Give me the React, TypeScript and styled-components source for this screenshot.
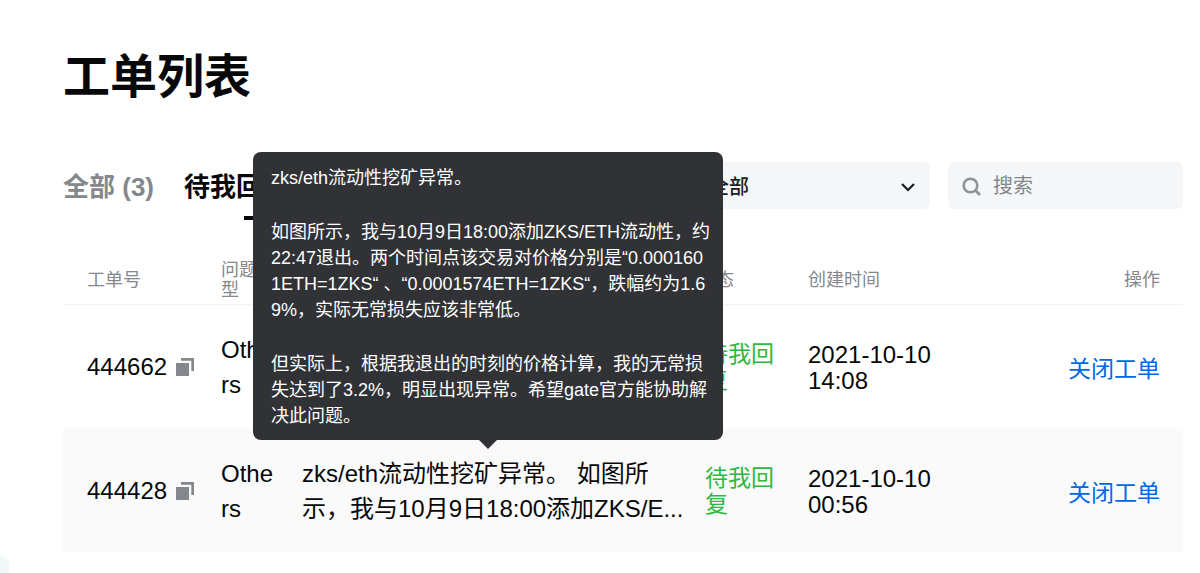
import React from "react";
import styled, { createGlobalStyle } from "styled-components";

const GlobalStyle = createGlobalStyle`
  * { box-sizing: border-box; }
  body {
    margin: 0;
    background: #fff;
    color: #06080a;
    font-family: "Liberation Sans", "Noto Sans CJK SC", sans-serif;
  }
  button, input, select { font-family: inherit; }
`;

const Page = styled.main`
  padding: 47px 17px 21px 63px;
`;

const Title = styled.h1`
  margin: 0 0 55px;
  font-size: 47px;
  line-height: 60px;
  font-weight: 700;
`;

const Toolbar = styled.div`
  display: flex;
  justify-content: space-between;
  align-items: center;
  margin-bottom: 45px;
`;

const Tabs = styled.div`
  display: flex;
  gap: 30px;
`;

const Tab = styled.button<{ $active?: boolean }>`
  position: relative;
  border: 0;
  padding: 4px 0 0;
  background: none;
  font-size: 26px;
  line-height: 43px;
  font-weight: 700;
  white-space: nowrap;
  color: ${(p) => (p.$active ? "#06080a" : "#84888c")};

  &::after {
    content: "";
    display: ${(p) => (p.$active ? "block" : "none")};
    position: absolute;
    left: 50%;
    bottom: -11px;
    width: 24px;
    height: 4px;
    margin-left: -12px;
    background: #06080a;
  }
`;

const Filters = styled.div`
  display: flex;
  gap: 18px;
`;

const Field = styled.label`
  display: flex;
  align-items: center;
  gap: 12px;
  width: 235px;
  height: 47px;
  padding: 2px 14px 0;
  border-radius: 6px;
  background: #f4f6f7;
`;

const Select = styled.select`
  flex: 1;
  min-width: 0;
  border: 0;
  padding: 0;
  background: none;
  appearance: none;
  font-size: 20px;
  font-weight: 500;
  color: #1b1e21;
`;

const SearchInput = styled.input`
  flex: 1;
  min-width: 0;
  border: 0;
  padding: 0;
  background: none;
  font-size: 20px;

  &::placeholder {
    color: #84888c;
    opacity: 1;
  }
`;

const Table = styled.table`
  width: 100%;
  table-layout: fixed;
  border-collapse: collapse;
`;

const Col = styled.col<{ $width?: number }>`
  width: ${(p) => (p.$width ? `${p.$width}px` : "auto")};
`;

const HeadCell = styled.th<{ $kind?: "id" | "status" | "action" }>`
  height: 50px;
  padding: 2px ${(p) => (p.$kind === "action" ? 23 : 12)}px 0
    ${(p) => (p.$kind === "id" ? 24 : p.$kind === "status" ? 5 : 12)}px;
  border-bottom: 1px solid #f1f2f3;
  font-size: 18px;
  line-height: 20px;
  font-weight: 400;
  text-align: ${(p) => (p.$kind === "action" ? "right" : "left")};
  color: #84888c;
`;

const Row = styled.tr`
  height: 124px;

  &:nth-child(even) { background: #fafafa; }
`;

const Cell = styled.td<{ $kind?: "id" | "type" | "content" | "status" | "date" | "action" }>`
  padding: ${(p) => (p.$kind === "action" ? 5 : p.$kind === "date" ? 4 : 2)}px
    ${(p) => (p.$kind === "action" ? 23 : p.$kind === "content" ? 6 : 12)}px 0
    ${(p) => (p.$kind === "id" ? 24 : 12)}px;
  font-size: ${(p) => (p.$kind === "status" || p.$kind === "action" ? 23 : 24)}px;
  line-height: ${(p) => (p.$kind === "type" || p.$kind === "content" ? 35 : 26)}px;
  text-align: ${(p) => (p.$kind === "action" ? "right" : "left")};
  word-break: ${(p) => (p.$kind === "type" ? "break-all" : "normal")};
  color: ${(p) => (p.$kind === "status" ? "#2eb840" : "inherit")};
`;

const TicketId = styled.div`
  display: flex;
  align-items: center;
  gap: 9px;
`;

const CopyButton = styled.button`
  display: flex;
  border: 0;
  padding: 0;
  background: none;
  color: #84888c;
`;

const CloseLink = styled.a`
  color: #0068e5;
  text-decoration: none;
`;

const Summary = styled.div`
  position: relative;
`;

const Tooltip = styled.div`
  position: absolute;
  z-index: 2;
  left: -49px;
  bottom: calc(100% + 16px);
  width: 470px;
  padding: 13px 12px 11px 18px;
  border-radius: 8px;
  background: #303236;
  color: #fff;
  font-size: 18px;
  line-height: 26px;
  word-break: break-all;

  &::after {
    content: "";
    position: absolute;
    top: 100%;
    left: 50%;
    margin-left: -9px;
    border: 9px solid transparent;
    border-top-color: #303236;
    border-bottom-width: 0;
  }
`;

const Paragraph = styled.p`
  margin: 0;

  & + & { margin-top: 28px; }
`;

const SideHandle = styled.div`
  position: fixed;
  left: 0;
  bottom: 0;
  width: 9px;
  height: 17px;
  border-top-right-radius: 8px;
  background: #f3f8f9;
`;

const CopyIcon = () => (
  <svg width="18" height="18" viewBox="0 0 18 18" fill="currentColor" aria-hidden="true">
    <path d="M0 5h13v13H0zM5 0h13v13h-2.700V2.700H5z" />
  </svg>
);

const ChevronIcon = () => (
  <svg width="16" height="16" viewBox="0 0 16 16" fill="none" stroke="#1b1e21" strokeWidth="2.200" aria-hidden="true">
    <path d="M2 5l6 6 6-6" />
  </svg>
);

const SearchIcon = () => (
  <svg width="19" height="19" viewBox="0 0 19 19" fill="none" stroke="#8e9296" strokeWidth="2.600" aria-hidden="true">
    <circle cx="8.500" cy="8.500" r="6.800" />
    <path d="M13 13l5 5" />
  </svg>
);

const tickets = [
  { id: "444662", type: "Others", date: "2021-10-10", time: "14:08", open: false },
  { id: "444428", type: "Others", date: "2021-10-10", time: "00:56", open: true },
];

const App = () => (
  <>
    <GlobalStyle />
    <Page>
      <Title>工单列表</Title>
      <Toolbar>
        <Tabs>
          <Tab>全部 (3)</Tab>
          <Tab $active>待我回复 (2)</Tab>
        </Tabs>
        <Filters>
          <Field>
            <Select aria-label="问题类型" defaultValue="all">
              <option value="all">全部</option>
            </Select>
            <ChevronIcon />
          </Field>
          <Field>
            <SearchIcon />
            <SearchInput aria-label="搜索" placeholder="搜索" />
          </Field>
        </Filters>
      </Toolbar>
      <Table>
        <colgroup>
          <Col $width={146} />
          <Col $width={81} />
          <Col />
          <Col $width={103} />
          <Col $width={160} />
          <Col $width={227} />
        </colgroup>
        <thead>
          <tr>
            <HeadCell $kind="id">工单号</HeadCell>
            <HeadCell>问题类型</HeadCell>
            <HeadCell />
            <HeadCell $kind="status">状态</HeadCell>
            <HeadCell>创建时间</HeadCell>
            <HeadCell $kind="action">操作</HeadCell>
          </tr>
        </thead>
        <tbody>
          {tickets.map((t) => (
            <Row key={t.id}>
              <Cell $kind="id">
                <TicketId>
                  {t.id}
                  <CopyButton aria-label="复制">
                    <CopyIcon />
                  </CopyButton>
                </TicketId>
              </Cell>
              <Cell $kind="type">{t.type}</Cell>
              <Cell $kind="content">
                {t.open && (
                  <Summary>
                    zks/eth流动性挖矿异常。 如图所示，我与10月9日18:00添加ZKS/E...
                    <Tooltip role="tooltip">
                      <Paragraph>zks/eth流动性挖矿异常。</Paragraph>
                      <Paragraph>
                        如图所示，我与10月9日18:00添加ZKS/ETH流动性，约22:47退出。两个时间点该交易对价格分别是“0.0001601ETH=1ZKS“ 、“0.0001574ETH=1ZKS“，跌幅约为1.69%，实际无常损失应该非常低。
                      </Paragraph>
                      <Paragraph>
                        但实际上，根据我退出的时刻的价格计算，我的无常损失达到了3.2%，明显出现异常。希望gate官方能协助解决此问题。
                      </Paragraph>
                    </Tooltip>
                  </Summary>
                )}
              </Cell>
              <Cell $kind="status">待我回复</Cell>
              <Cell $kind="date">
                {t.date} {t.time}
              </Cell>
              <Cell $kind="action">
                <CloseLink href="#close">关闭工单</CloseLink>
              </Cell>
            </Row>
          ))}
        </tbody>
      </Table>
    </Page>
    <SideHandle />
  </>
);

export default App;
